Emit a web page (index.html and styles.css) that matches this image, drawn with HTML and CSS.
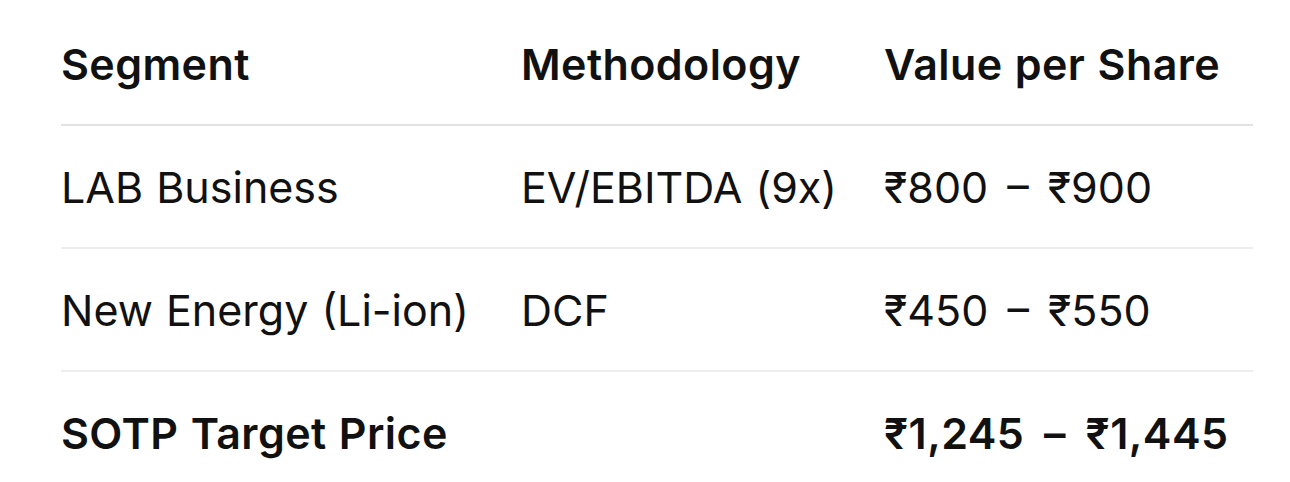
FILE: index.html
```html
<!DOCTYPE html>
<html>
<head>
  <title>SOTP Valuation</title>
  <link rel="stylesheet" href="styles.css">
</head>
<body>
  <table class="sotp-table">
    <colgroup>
      <col class="col-segment">
      <col class="col-method">
      <col class="col-value">
    </colgroup>
    <thead>
      <tr>
        <th>Segment</th>
        <th>Methodology</th>
        <th>Value per Share</th>
      </tr>
    </thead>
    <tbody>
      <tr>
        <td>LAB Business</td>
        <td>EV/EBITDA (9x)</td>
        <td class="range">₹800 – ₹900</td>
      </tr>
      <tr>
        <td>New Energy (Li-ion)</td>
        <td>DCF</td>
        <td class="range">₹450 – ₹550</td>
      </tr>
      <tr class="total-row">
        <td>SOTP Target Price</td>
        <td></td>
        <td class="range">₹1,245 – ₹1,445</td>
      </tr>
    </tbody>
  </table>
</body>
</html>
```

FILE: styles.css
```css
body {
  margin: 0;
  padding: 3px 37px 0 61px;
  background: #ffffff;
  font-family: Inter, "Noto Sans", sans-serif;
  color: #111111;
}

.sotp-table {
  width: 1192px;
  border-collapse: collapse;
  table-layout: fixed;
  font-size: 43px;
  word-spacing: 1px;
}

.col-segment {
  width: 460px;
}

.col-method {
  width: 363px;
}

th, td {
  padding: 0;
  height: 121px;
  text-align: left;
  vertical-align: middle;
  white-space: nowrap;
  line-height: 50px;
}

th {
  font-weight: 600;
  letter-spacing: 0.4px;
  border-bottom: 2px solid #e2e2e2;
}

tbody tr {
  border-bottom: 2px solid #ededed;
}

tbody tr:last-child {
  border-bottom: none;
}

.range {
  word-spacing: 7px;
}

.total-row td {
  font-weight: 600;
  letter-spacing: 0.4px;
}

.total-row .range {
  word-spacing: 8.5px;
}
```
